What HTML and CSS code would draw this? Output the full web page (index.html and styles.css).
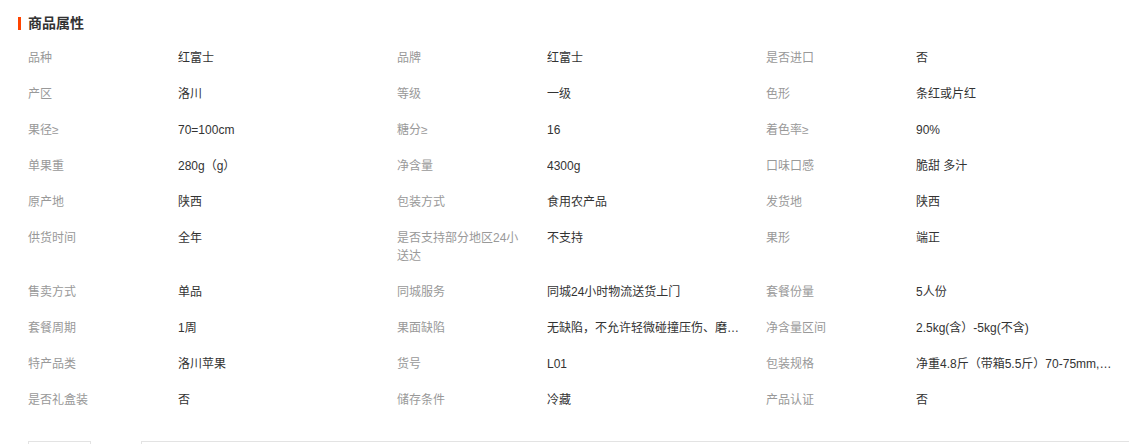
FILE: index.html
```html
<!DOCTYPE html>
<html lang="zh-CN">
<head>
    <meta charset="UTF-8">
    <title>商品属性</title>
    <link rel="stylesheet" href="styles.css">
</head>
<body>
    <div class="attrs">
        <h3 class="attrs-title">商品属性</h3>
        <ul class="attr-list">
            <li><span class="attr-name">品种</span><span class="attr-value">红富士</span></li>
            <li><span class="attr-name">品牌</span><span class="attr-value">红富士</span></li>
            <li><span class="attr-name">是否进口</span><span class="attr-value">否</span></li>

            <li><span class="attr-name">产区</span><span class="attr-value">洛川</span></li>
            <li><span class="attr-name">等级</span><span class="attr-value">一级</span></li>
            <li><span class="attr-name">色形</span><span class="attr-value">条红或片红</span></li>

            <li><span class="attr-name">果径≥</span><span class="attr-value">70=100cm</span></li>
            <li><span class="attr-name">糖分≥</span><span class="attr-value">16</span></li>
            <li><span class="attr-name">着色率≥</span><span class="attr-value">90%</span></li>

            <li><span class="attr-name">单果重</span><span class="attr-value">280g（g）</span></li>
            <li><span class="attr-name">净含量</span><span class="attr-value">4300g</span></li>
            <li><span class="attr-name">口味口感</span><span class="attr-value">脆甜 多汁</span></li>

            <li><span class="attr-name">原产地</span><span class="attr-value">陕西</span></li>
            <li><span class="attr-name">包装方式</span><span class="attr-value">食用农产品</span></li>
            <li><span class="attr-name">发货地</span><span class="attr-value">陕西</span></li>

            <li><span class="attr-name">供货时间</span><span class="attr-value">全年</span></li>
            <li><span class="attr-name">是否支持部分地区24小送达</span><span class="attr-value">不支持</span></li>
            <li><span class="attr-name">果形</span><span class="attr-value">端正</span></li>

            <li><span class="attr-name">售卖方式</span><span class="attr-value">单品</span></li>
            <li><span class="attr-name">同城服务</span><span class="attr-value">同城24小时物流送货上门</span></li>
            <li><span class="attr-name">套餐份量</span><span class="attr-value">5人份</span></li>

            <li><span class="attr-name">套餐周期</span><span class="attr-value">1周</span></li>
            <li><span class="attr-name">果面缺陷</span><span class="attr-value">无缺陷，不允许轻微碰撞压伤、磨损、日灼、锈斑</span></li>
            <li><span class="attr-name">净含量区间</span><span class="attr-value">2.5kg(含）-5kg(不含)</span></li>

            <li><span class="attr-name">特产品类</span><span class="attr-value">洛川苹果</span></li>
            <li><span class="attr-name">货号</span><span class="attr-value">L01</span></li>
            <li><span class="attr-name">包装规格</span><span class="attr-value">净重4.8斤（带箱5.5斤）70-75mm,12个装</span></li>

            <li><span class="attr-name">是否礼盒装</span><span class="attr-value">否</span></li>
            <li><span class="attr-name">储存条件</span><span class="attr-value">冷藏</span></li>
            <li><span class="attr-name">产品认证</span><span class="attr-value">否</span></li>
        </ul>
        <div class="tabs">
            <span class="tab"></span>
            <span class="tab-rest"></span>
        </div>
    </div>
</body>
</html>
```

FILE: styles.css
```css
body {
    margin: 0;
    font-family: "Liberation Sans", "Noto Sans CJK SC", sans-serif;
    font-size: 12px;
    color: #333;
    background: #fff;
}
.attrs {
    padding-top: 14px;
    overflow: hidden;
}
.attrs-title {
    display: flex;
    align-items: center;
    margin: 0 0 8px 18px;
    height: 18px;
    font-size: 14px;
    line-height: 18px;
    font-weight: bold;
    color: #333;
}
.attrs-title::before {
    content: "";
    width: 3px;
    height: 13px;
    margin-right: 7px;
    background: #ff4400;
}
.attr-list {
    list-style: none;
    margin: 0 0 0 28px;
    padding: 0;
    display: grid;
    grid-template-columns: repeat(3, 369px);
}
.attr-list li {
    display: flex;
    padding: 9px 0;
    line-height: 18px;
}
.attr-name {
    width: 128px;
    padding-right: 22px;
    flex-shrink: 0;
    color: #999;
}
.attr-value {
    width: 197px;
    white-space: nowrap;
    overflow: hidden;
    text-overflow: ellipsis;
    color: #333;
}
.tabs {
    display: flex;
    margin: 23px 0 0 28px;
    height: 20px;
}
.tab {
    width: 61px;
    border: 1px solid #e3e3e3;
    border-bottom: none;
}
.tab-rest {
    flex: 1;
    margin-left: 50px;
    border-top: 1px solid #e3e3e3;
    border-left: 1px solid #e3e3e3;
}
```
